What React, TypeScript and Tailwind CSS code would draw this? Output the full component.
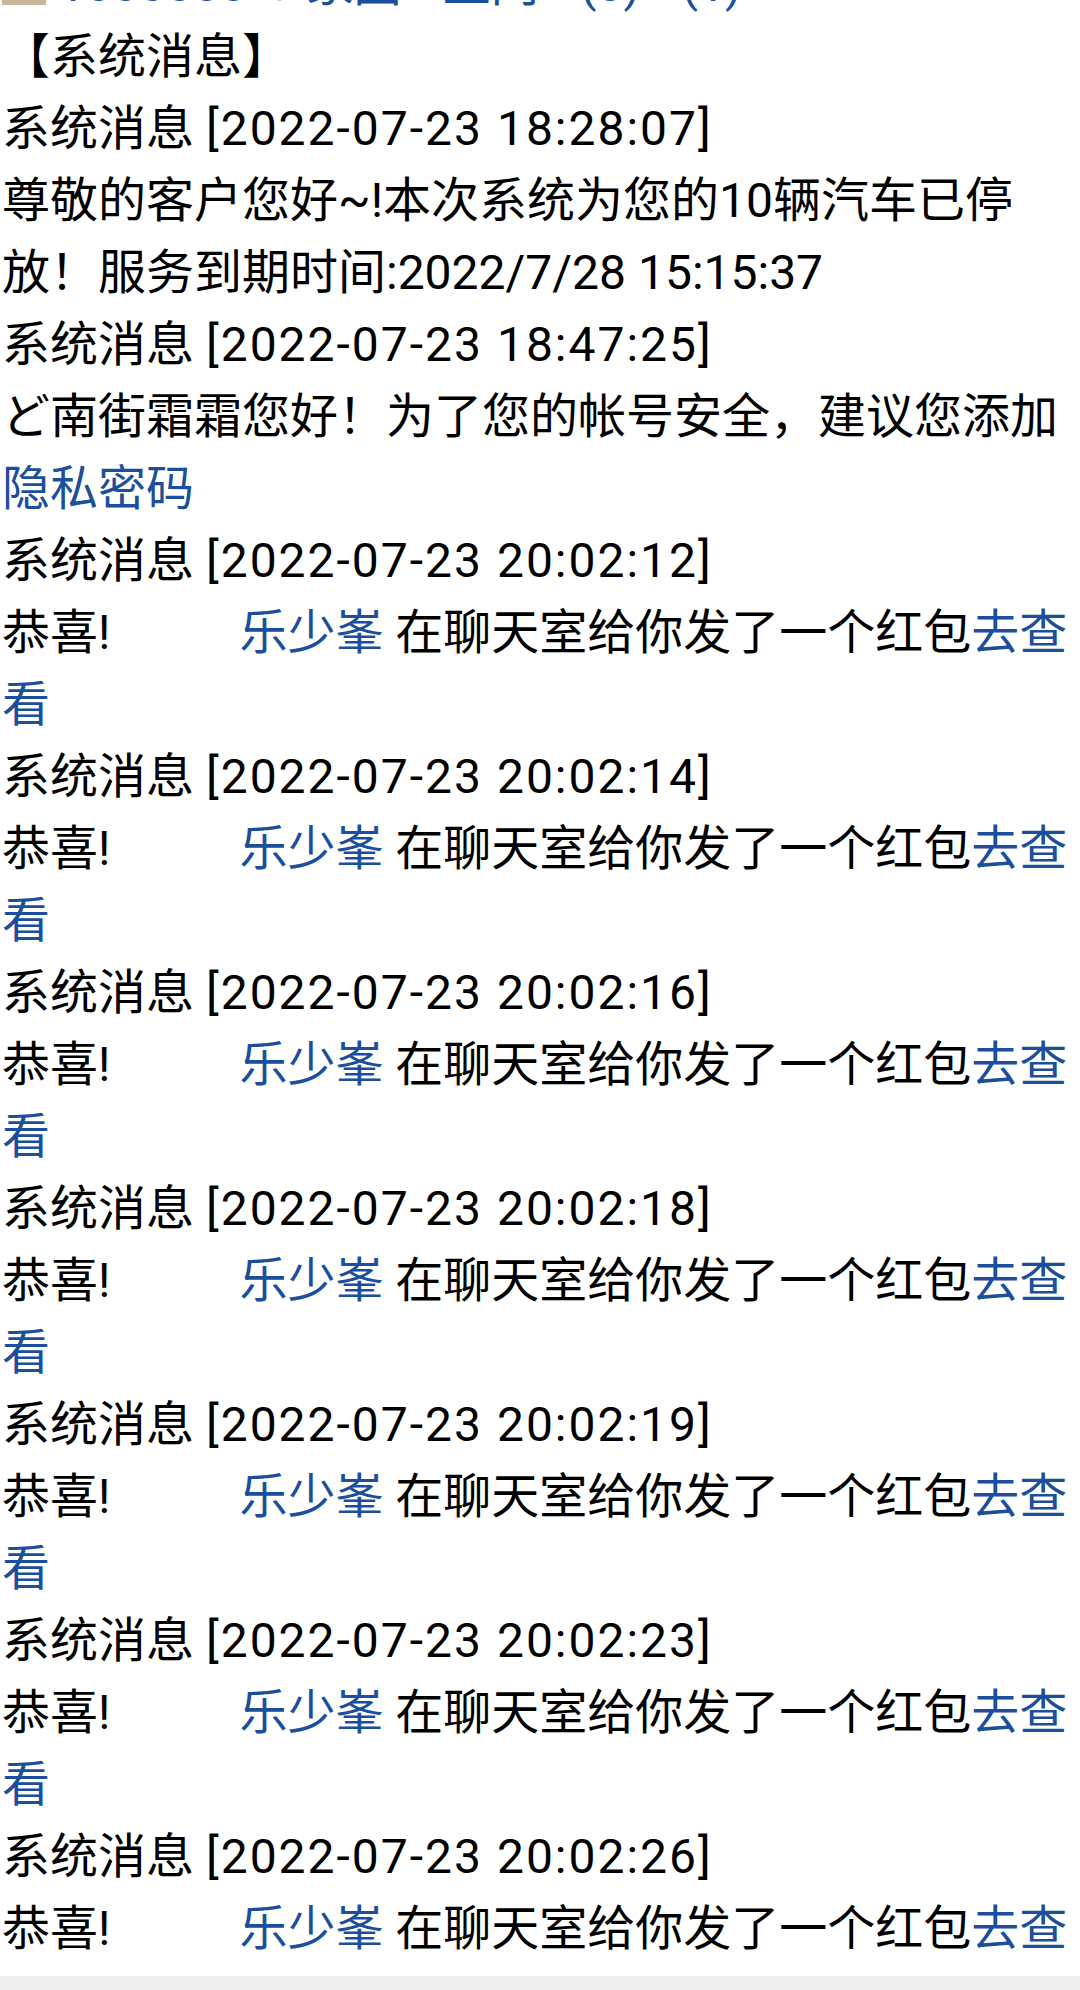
const blue = 'text-[#1b4f9c]';

function Msg({ time }: { time: string }) {
  return (
    <div>
      系统消息 <span className="tracking-[2px]">[{time}]</span>
    </div>
  );
}

function RedPacket({ time }: { time: string }) {
  return (
    <>
      <Msg time={time} />
      <div>
        恭喜!
        <span className="inline-block w-[129px]" />
        <span className={blue}>乐少峯</span> 在聊天室给你发了一个红包<span className={blue}>去查看</span>
      </div>
    </>
  );
}

const packets = [
  '2022-07-23 20:02:12',
  '2022-07-23 20:02:14',
  '2022-07-23 20:02:16',
  '2022-07-23 20:02:18',
  '2022-07-23 20:02:19',
  '2022-07-23 20:02:23',
  '2022-07-23 20:02:26',
];

export default function App() {
  return (
    <div className="min-h-[1990px] overflow-hidden bg-white">
      <div className="-mt-[51px] pl-[2px] text-[48px] leading-[72px] text-black [font-family:Roboto,'Noto_Sans_CJK_SC',sans-serif]">
        <div className="flex items-end whitespace-nowrap">
          <span className="mb-[16px] inline-block h-[40px] w-[44px] bg-[#c9b59a]" />
          <span className={`ml-[12px] ${blue}`}>1000000</span>
          <span className="ml-[22px] text-[#bbbbbb]">?</span>
          <span className={`ml-[14px] ${blue}`}>家园</span>
          <span className={`ml-[14px] ${blue}`}>-</span>
          <span className={`ml-[14px] ${blue}`}>上网</span>
          <span className={`ml-[14px] ${blue}`}>-</span>
          <span className={`ml-[14px] ${blue}`}>(0)</span>
          <span className={`ml-[14px] ${blue}`}>-</span>
          <span className={`ml-[14px] ${blue}`}>(1)</span>
        </div>
        <div>【系统消息】</div>
        <Msg time="2022-07-23 18:28:07" />
        <div>尊敬的客户您好~!本次系统为您的10辆汽车已停放！服务到期时间:2022/7/28 15:15:37</div>
        <Msg time="2022-07-23 18:47:25" />
        <div>
          ど南街霜霜您好！为了您的帐号安全，建议您添加<span className={blue}>隐私密码</span>
        </div>
        {packets.map(t => (
          <RedPacket key={t} time={t} />
        ))}
      </div>
      <div className="fixed inset-x-0 bottom-0 h-[14px] bg-[#eeeeee]" />
    </div>
  );
}
